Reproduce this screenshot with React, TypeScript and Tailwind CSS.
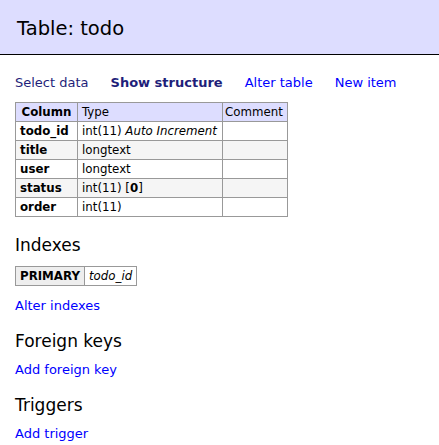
import React from 'react';

const rows = [
  { name: 'todo_id', type: 'int(11)', extra: 'Auto Increment' },
  { name: 'title', type: 'longtext' },
  { name: 'user', type: 'longtext' },
  { name: 'status', type: 'int(11)', def: '0' },
  { name: 'order', type: 'int(11)' },
];

const cell = 'border-r border-b border-[#999] h-[19px] leading-[18px] whitespace-nowrap';

export default function App() {
  return (
    <div className="w-[439px] h-[445px] bg-white text-black text-[13px] leading-[18px] font-['DejaVu_Sans',Verdana,sans-serif] overflow-hidden">
      <h2 className="h-[55px] bg-[#ddf] border-b border-black pl-[17px] pt-[16px] text-[19.5px] leading-[26px] font-normal">
        Table: todo
      </h2>

      <div className="pl-[15px]">
        <p className="mt-[19px] flex gap-[22px] whitespace-nowrap">
          <a className="text-[#1f1f7a]">Select data</a>
          <a className="text-[#1f1f7a] font-bold">Show structure</a>
          <a className="text-[#00f]">Alter table</a>
          <a className="text-[#00f]">New item</a>
        </p>

        <table className="mt-[10px] border-t border-l border-[#999] text-[11.8px]" style={{ borderSpacing: 0, borderCollapse: 'separate' }}>
          <thead>
            <tr className="bg-[#ddf]">
              <th className={`${cell} px-[4px] text-center font-bold w-[62px]`}>Column</th>
              <td className={`${cell} px-[4px] w-[145px]`}>Type</td>
              <td className={`${cell} px-[2px] w-[65px]`}>Comment</td>
            </tr>
          </thead>
          <tbody>
            {rows.map((r, i) => (
              <tr key={r.name} className={i % 2 === 1 ? 'bg-[#f5f5f5]' : 'bg-white'}>
                <th className={`${cell} px-[4px] text-left font-bold`}>{r.name}</th>
                <td className={`${cell} px-[4px]`}>
                  {r.type}
                  {r.extra && <i> {r.extra}</i>}
                  {r.def && (
                    <>
                      {' '}[<b>{r.def}</b>]
                    </>
                  )}
                </td>
                <td className={cell}></td>
              </tr>
            ))}
          </tbody>
        </table>

        <h3 className="mt-[17px] text-[17px] leading-[22px] font-normal">Indexes</h3>
        <table className="mt-[10px] border-t border-l border-[#999] text-[11.8px]" style={{ borderSpacing: 0, borderCollapse: 'separate' }}>
          <tbody>
            <tr>
              <th className={`${cell} px-[4px] bg-[#eee] font-bold text-left`}>PRIMARY</th>
              <td className={`${cell} px-[4px]`}><i>todo_id</i></td>
            </tr>
          </tbody>
        </table>
        <p className="mt-[11px]"><a className="text-[#00f]">Alter indexes</a></p>

        <h3 className="mt-[15px] text-[17px] leading-[22px] font-normal">Foreign keys</h3>
        <p className="mt-[9px]"><a className="text-[#00f]">Add foreign key</a></p>

        <h3 className="mt-[15px] text-[17px] leading-[22px] font-normal">Triggers</h3>
        <p className="mt-[9px]"><a className="text-[#00f]">Add trigger</a></p>
      </div>
    </div>
  );
}
